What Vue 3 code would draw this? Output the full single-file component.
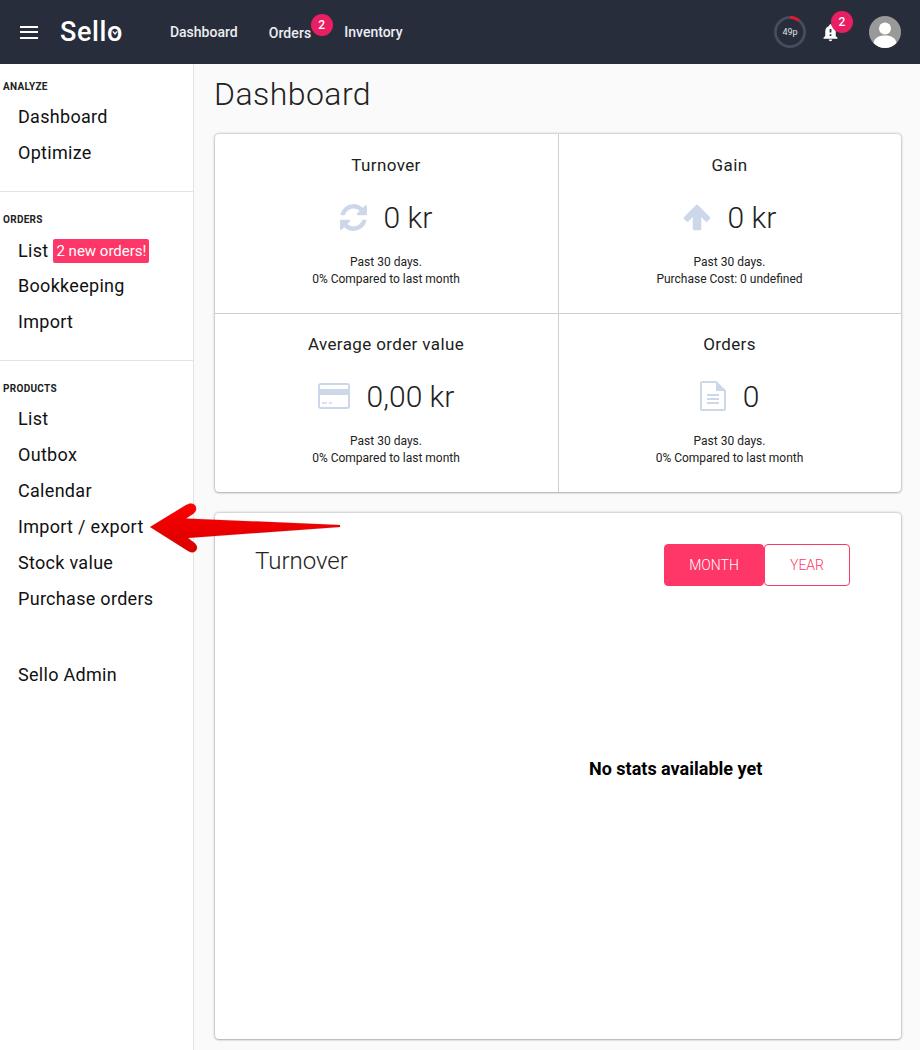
<template>
  <div class="page">
    <header class="topbar">
      <button class="burger" aria-label="Menu"><span></span><span></span><span></span></button>
      <div class="logo">Sell<span class="logo-o">o<svg viewBox="0 0 10 10" class="logo-tick"><path d="M2.8 3.4 5 6l2.2-2.6" fill="none" stroke="#fff" stroke-width="1.2"/></svg></span></div>
      <nav class="topnav">
        <a>Dashboard</a>
        <a class="with-badge">Orders<span class="pill nav-pill">2</span></a>
        <a>Inventory</a>
      </nav>
      <div class="top-right">
        <div class="ring">
          <svg viewBox="0 0 32 32" width="32" height="32">
            <circle cx="16" cy="16" r="14.6" fill="none" stroke="#484d5d" stroke-width="2.800"/>
            <path d="M16 1.400A14.600 14.600 0 0 1 25 4.500" fill="none" stroke="#e8172c" stroke-width="2.800"/>
          </svg>
          <span>49p</span>
        </div>
        <div class="bell">
          <svg viewBox="0 0 24 24" width="21" height="21">
            <path fill="#fff" d="M12 22c1.100 0 2-.9 2-2h-4c0 1.100.9 2 2 2zm6-6v-5c0-3.100-1.600-5.600-4.500-6.300V4c0-.8-.7-1.500-1.500-1.500s-1.500.7-1.500 1.500v.7C7.600 5.400 6 7.900 6 11v5l-2 2v1h16v-1l-2-2zm-5 0h-2v-2h2v2zm0-4h-2V8h2v4z"/>
          </svg>
          <span class="pill bell-pill">2</span>
        </div>
        <div class="avatar">
          <svg viewBox="0 0 32 32" width="32" height="32">
            <circle cx="16" cy="16" r="16" fill="#999"/>
            <circle cx="16" cy="12.500" r="6" fill="#fff"/>
            <path fill="#fff" d="M4.500 27c.8-5 5-7.500 11.500-7.500S26.700 22 27.500 27A16 16 0 0 1 16 32 16 16 0 0 1 4.500 27z"/>
          </svg>
        </div>
      </div>
    </header>

    <div class="body-row">
      <aside class="sidebar">
        <section v-for="sec in sections" :key="sec.title" class="side-sec">
          <h4>{{ sec.title }}</h4>
          <ul>
            <li v-for="it in sec.items" :key="it.label" :class="{ 'has-tag': it.tag }">
              {{ it.label }}<span v-if="it.tag" class="new-tag">{{ it.tag }}</span>
            </li>
          </ul>
        </section>
        <div class="side-admin">Sello Admin</div>
      </aside>

      <main class="content">
        <h1>Dashboard</h1>
        <div class="stats card">
          <div v-for="s in stats" :key="s.title" class="stat">
            <div class="stat-title">{{ s.title }}</div>
            <div class="stat-value">
              <svg v-if="s.icon === 'refresh'" class="ico" viewBox="0 0 1536 1536" width="27" height="27"><path fill="#ccd7e9" d="M1511 928q0 5-1 7-64 268-268 434.500T764 1536q-146 0-282.500-55T238 1324l-129 129q-19 19-45 19t-45-19-19-45V960q0-26 19-45t45-19h448q26 0 45 19t19 45-19 45l-137 137q71 66 161 102t187 36q134 0 250-65t186-179q11-17 53-117 8-23 30-23h192q13 0 22.500 9.500t9.500 22.500zm25-800v448q0 26-19 45t-45 19h-448q-26 0-45-19t-19-45 19-45l138-138Q969 256 768 256q-134 0-250 65T332 500q-11 17-53 117-8 23-30 23H50q-13 0-22.500-9.500T18 608v-7q65-268 270-434.500T768 0q146 0 284 55.500T1297 212l130-129q19-19 45-19t45 19 19 45z"/></svg>
              <svg v-else-if="s.icon === 'up'" class="ico" viewBox="0 0 28 28" width="28" height="28"><path fill="#ccd7e9" stroke="#ccd7e9" stroke-width="2.500" stroke-linejoin="round" d="M14 3 26 15l-2.500 2.500-6.500-6.500V26h-6V11l-6.500 6.500L2 15z"/></svg>
              <svg v-else-if="s.icon === 'card'" class="ico" viewBox="0 0 32 26" width="32" height="26"><rect x="1" y="1" width="30" height="24" rx="2" fill="none" stroke="#ccd7e9" stroke-width="2"/><rect x="1" y="6" width="30" height="6" fill="#ccd7e9"/><path d="M4 20h5M11 20h3" stroke="#ccd7e9" stroke-width="1.500"/></svg>
              <svg v-else class="ico" viewBox="0 0 26 30" width="26" height="30"><path fill="none" stroke="#ccd7e9" stroke-width="2" d="M1 2a1 1 0 0 1 1-1h14l9 9v18a1 1 0 0 1-1 1H2a1 1 0 0 1-1-1z"/><path fill="#ccd7e9" d="M16 1v9h9z"/><path stroke="#ccd7e9" stroke-width="1.800" d="M7 14h12M7 18h12M7 22h12"/></svg>
              <span>{{ s.value }}</span>
            </div>
            <p>Past 30 days.<br>{{ s.note }}</p>
          </div>
        </div>

        <div class="chart card">
          <div class="chart-head">
            <h2>Turnover</h2>
            <div class="toggle">
              <button class="on">MONTH</button>
              <button>YEAR</button>
            </div>
          </div>
          <div class="empty">No stats available yet</div>
        </div>
      </main>
    </div>

    <svg class="arrow" viewBox="0 0 200 60" width="200" height="60">
      <defs>
        <linearGradient id="red" x1="0" y1="0" x2="0" y2="1">
          <stop offset="0" stop-color="#ff0000"/>
          <stop offset="1" stop-color="#d80000"/>
        </linearGradient>
      </defs>
      <path fill="url(#red)" stroke="#933" stroke-opacity=".25" stroke-width=".6" stroke-linejoin="round"
        d="M2 28 38 6c4-2.500 8-2 9.500 1 1.500 3 .5 6-2.500 8l-7 4.500L192 26v2L40 39l6 4.500c3 2.500 4 5.500 2 8s-5 2.500-8 .5z"/>
    </svg>
  </div>
</template>

<script setup>
const sections = [
  { title: 'ANALYZE', items: [{ label: 'Dashboard' }, { label: 'Optimize' }] },
  { title: 'ORDERS', items: [{ label: 'List', tag: '2 new orders!' }, { label: 'Bookkeeping' }, { label: 'Import' }] },
  { title: 'PRODUCTS', items: [{ label: 'List' }, { label: 'Outbox' }, { label: 'Calendar' }, { label: 'Import / export' }, { label: 'Stock value' }, { label: 'Purchase orders' }] }
]

const stats = [
  { title: 'Turnover', icon: 'refresh', value: '0 kr', note: '0% Compared to last month' },
  { title: 'Gain', icon: 'up', value: '0 kr', note: 'Purchase Cost: 0 undefined' },
  { title: 'Average order value', icon: 'card', value: '0,00 kr', note: '0% Compared to last month' },
  { title: 'Orders', icon: 'doc', value: '0', note: '0% Compared to last month' }
]
</script>

<style>
html, body { margin: 0; background: #fafafa; }
</style>

<style scoped>
.page {
  position: relative;
  width: 920px;
  height: 1050px;
  overflow: hidden;
  font-family: Roboto, "Liberation Sans", sans-serif;
  color: #212121;
  background: #fafafa;
}
.topbar {
  height: 64px;
  background: #282d3c;
  display: flex;
  align-items: center;
  padding: 0 19px 0 20px;
  color: #fff;
}
.burger { background: none; border: none; padding: 0; width: 18px; display: flex; flex-direction: column; gap: 3.500px; }
.burger span { display: block; height: 2px; background: #fff; }
.logo { margin-left: 22px; font-size: 27px; font-weight: 500; letter-spacing: .6px; line-height: 30px; }
.logo-o { position: relative; display: inline-block; }
.logo-tick { position: absolute; left: 3px; top: 11px; width: 10px; height: 10px; }
.topnav { display: flex; margin-left: 47px; font-size: 14px; font-weight: 500; color: #eceef2; }
.topnav a { margin-right: 31px; }
.topnav a.with-badge { position: relative; top: 1px; letter-spacing: .1px; margin-right: 33px; }
.pill {
  position: absolute;
  width: 22px;
  height: 22px;
  border-radius: 50%;
  background: #e91e63;
  color: #fff;
  font-size: 12px;
  font-weight: 500;
  line-height: 22px;
  text-align: center;
}
.nav-pill { left: 42px; top: -11px; }
.top-right { margin-left: auto; display: flex; align-items: center; }
.ring { position: relative; width: 32px; height: 32px; }
.ring span { position: absolute; inset: 0; font-size: 9px; line-height: 32px; text-align: center; color: #dfe1e6; }
.bell { position: relative; width: 21px; height: 21px; margin-left: 14px; }
.bell-pill { left: 11px; top: -11px; }
.avatar { width: 32px; height: 32px; margin-left: 28px; }
.body-row { display: flex; height: 986px; }
.sidebar {
  width: 193px;
  background: #fff;
  border-right: 1px solid #e4e4e4;
  padding-top: 15px;
  flex-shrink: 0;
}
.side-sec { border-bottom: 1px solid #e4e4e4; padding-bottom: 20px; margin-bottom: 20px; }
.side-sec:nth-of-type(3) { border-bottom: none; padding-bottom: 0; margin-bottom: 40px; }
.side-sec h4 { margin: 0 0 4px 3px; font-size: 10px; line-height: 16px; font-weight: 700; letter-spacing: .3px; color: #212121; }
.side-sec:nth-of-type(2) h4 { margin-bottom: 5px; }
.side-sec ul { list-style: none; margin: 0; padding: 0; }
.side-sec li, .side-admin { height: 36px; line-height: 36px; padding-left: 18px; font-size: 18px; letter-spacing: .3px; color: #111; }
.side-sec li.has-tag { height: 35px; }
.new-tag {
  display: inline-block;
  margin-left: 5px;
  padding: 0 3px;
  background: #fe3768;
  border-radius: 2px;
  color: #fff;
  font-size: 15px;
  letter-spacing: 0;
  line-height: 24px;
  vertical-align: 1px;
}
.content { flex: 1; padding: 0 19px 0 21px; min-width: 0; }
.content h1 { margin: 11px 0 21px; font-size: 32px; line-height: 38px; font-weight: 300; letter-spacing: .45px; color: #222; transform: translateX(-1px); }
.card {
  background: #fff;
  border-radius: 4px;
  box-shadow: 0 0 3px rgba(0, 0, 0, .38), 0 1px 2px rgba(0, 0, 0, .16);
}
.stats { display: grid; grid-template-columns: 1fr 1fr; grid-template-rows: 180px 178px; }
.stat { text-align: center; padding: 20px 1px 0 0; box-sizing: border-box; }
.stat:nth-child(even) { border-left: 1px solid #cfcfcf; }
.stat:nth-child(-n+2) { border-bottom: 1px solid #cfcfcf; }
.stat:nth-child(n+3) { padding-top: 19px; }
.stat-title { font-size: 17px; line-height: 22px; letter-spacing: .38px; color: #212121; }
.stat-value { display: flex; justify-content: center; align-items: center; gap: 17px; height: 40px; margin-top: 21px; font-size: 30px; font-weight: 300; color: #222; }
.stat p { margin: 17px 0 0; font-size: 12px; line-height: 17px; color: #222; }
.chart { margin-top: 21px; height: 526px; position: relative; }
.chart-head { display: flex; justify-content: space-between; padding: 31px 51px 0 40px; }
.chart-head h2 { margin: 0; font-size: 24px; line-height: 34px; font-weight: 300; color: #222; }
.toggle { display: flex; }
.toggle button {
  width: 86px;
  height: 42px;
  box-sizing: border-box;
  border: 1px solid #fe3768;
  border-radius: 4px;
  background: #fff;
  color: #fe3768;
  font-family: inherit;
  font-size: 14px;
  font-weight: 300;
  padding: 0;
}
.toggle button.on { width: 100px; background: #fe3768; color: #fff; }
.empty { position: absolute; left: 374px; top: 245px; font-size: 18px; font-weight: 700; line-height: 22px; color: #000; }
.arrow { position: absolute; left: 148px; top: 499px; pointer-events: none; }
</style>
